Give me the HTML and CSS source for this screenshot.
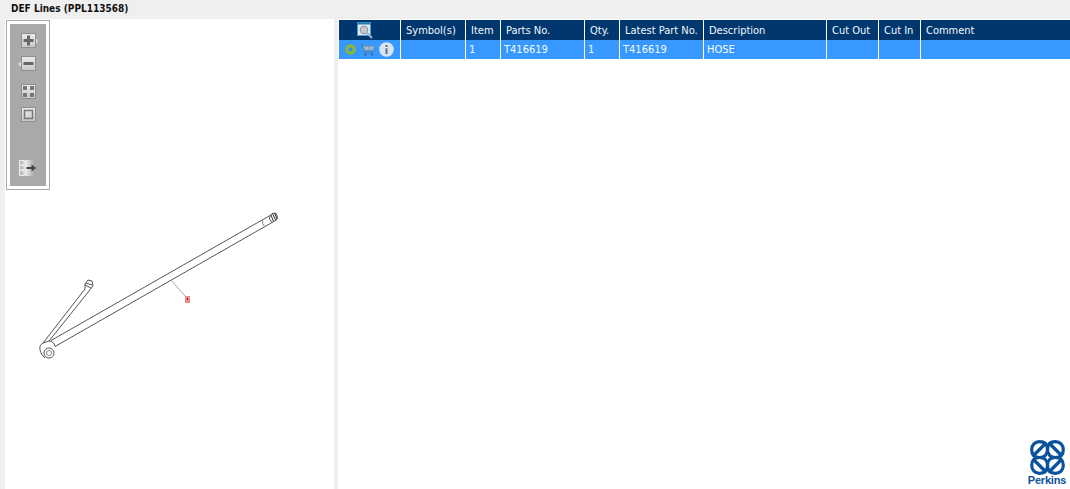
FILE: index.html
```html
<!DOCTYPE html>
<html lang="en">
<head>
<meta charset="utf-8">
<title>DEF Lines</title>
<link rel="stylesheet" href="styles.css">
</head>
<body>
<div class="app">
  <header class="title">DEF Lines (PPL113568)</header>
  <main class="main">
    <section class="viewer">
      <svg class="drawing" width="329" height="470" viewBox="5 19 329 470" fill="none">
        <g stroke="#555" stroke-width="1">
          <path d="M270 215.500L51 340.500M272 222.500L55 346.500"/>
          <path d="M43 343L85 289M49 341L89 291"/>
          <path d="M85 289L85 284L88 280L92 281L93 286L89 291M85 285L91 288M86 283L92 285"/>
          <path d="M262.500 220Q262 224 264.500 226.500" stroke="#888"/>
          <path d="M270 215.500L273 213L276 213.500L277.500 217L276.500 220L272 222.500Q268 219 270 215.500Z" fill="#fff"/>
          <path d="M272.500 213.500L275.500 220M274.500 213L277 219M271 215L273.500 221.500" stroke="#333"/>
          <path d="M40 350Q39 345 43 343L49 341Q54 341 55 346.500M40 350Q41 355 45 358"/>
          <circle cx="49" cy="353" r="5" fill="#fff"/>
          <circle cx="49" cy="353" r="2.500" stroke="#888"/>
        </g>
        <path d="M171 280L185 296" stroke="#aaa" stroke-width="1"/>
        <rect x="185" y="296" width="5" height="7" fill="#f08a8a"/>
        <rect x="187" y="298" width="1" height="2" fill="#733"/>
      </svg>
      <nav class="toolbar-frame">
        <div class="toolbar">
          <button class="tool tool-zoom-in" type="button" aria-label="Zoom in">
            <svg width="15" height="15" viewBox="0 0 15 15"><path d="M6 2.500h3V6h3.500v3H9v3.500H6V9H2.500V6H6z" fill="#666"/></svg>
          </button>
          <button class="tool tool-zoom-out" type="button" aria-label="Zoom out">
            <svg width="15" height="15" viewBox="0 0 15 15"><path d="M2.500 6h10v3h-10z" fill="#666"/></svg>
          </button>
          <button class="tool tool-grid" type="button" aria-label="Fit all">
            <svg width="15" height="15" viewBox="0 0 15 15"><path d="M2 2h4v4H2zM9 2h4v4H9zM2 9h4v4H2zM9 9h4v4H9z" fill="#777"/></svg>
          </button>
          <button class="tool tool-single" type="button" aria-label="Fit one">
            <svg width="15" height="15" viewBox="0 0 15 15"><rect x="3.500" y="3.500" width="8" height="8" fill="none" stroke="#777" stroke-width="1.500"/></svg>
          </button>
          <button class="tool-panel" type="button" aria-label="Show list">
            <svg width="18" height="16" viewBox="0 0 18 16">
              <defs><linearGradient id="fade"><stop offset="0" stop-color="#f4f4f4"/><stop offset="1" stop-color="#f4f4f4" stop-opacity="0"/></linearGradient></defs>
              <path d="M.500.500h4.500v4.500H.500zM.500 5.500h4.500v4.500H.500zM.500 10.500h4.500v5H.500z" fill="#bdbdbd" stroke="#eee"/>
              <path d="M5.500 0H15v16H5.500z" fill="url(#fade)"/>
              <path d="M7.500 7h5V4.500L17 8l-4.500 3.500V9h-5z" fill="#444"/>
            </svg>
          </button>
        </div>
      </nav>
    </section>
    <section class="parts">
      <table class="grid">
        <colgroup>
          <col class="c-icons"><col class="c-symbol"><col class="c-item"><col class="c-partno"><col class="c-qty"><col class="c-latest"><col class="c-desc"><col class="c-cutout"><col class="c-cutin"><col>
        </colgroup>
        <thead>
          <tr>
            <th class="head-icon">
              <svg width="17" height="17" viewBox="0 0 17 17" fill="none">
                <rect x=".500" y=".500" width="13" height="13" fill="#dfe9f2" stroke="#4f9bd0"/>
                <path d="M1 1.500h12" stroke="#1f78b8" stroke-width="2"/>
                <circle cx="7" cy="8" r="3.800" fill="#c9c9c9" stroke="#8a94a0"/>
                <path d="M10 11l5 5" stroke="#8fb4d4" stroke-width="2"/>
              </svg>
            </th>
            <th>Symbol(s)</th>
            <th>Item</th>
            <th>Parts No.</th>
            <th>Qty.</th>
            <th>Latest Part No.</th>
            <th>Description</th>
            <th>Cut Out</th>
            <th>Cut In</th>
            <th>Comment</th>
          </tr>
        </thead>
        <tbody>
          <tr>
            <td class="row-icons">
              <span class="icon-set">
                <svg width="11" height="11" viewBox="0 0 12 12"><circle cx="6" cy="6" r="4" fill="none" stroke="#8dbb2e" stroke-width="3"/><circle cx="6" cy="6" r="5.200" fill="none" stroke="#8dbb2e" stroke-width="1.400" stroke-dasharray="2 2"/><circle cx="6" cy="6" r="1.700" fill="#3a8fd8"/></svg>
                <svg width="15" height="12" viewBox="0 0 15 12" fill="none"><path d="M0 .800h2.500l2 7.500h9" stroke="#4f7ea8"/><path d="M3 2h11.500l-1.500 4.500H4.500z" fill="#a9bfd2" stroke="#5c87ac" stroke-width=".7"/><path d="M6 2v4.500M8.500 2v4.500M11 2v4.500" stroke="#6d93b4" stroke-width=".7"/><circle cx="5.500" cy="10.500" r="1.200" fill="#3f6f9c"/><circle cx="12" cy="10.500" r="1.200" fill="#3f6f9c"/></svg>
                <svg width="15" height="15" viewBox="0 0 15 15"><circle cx="7.500" cy="7.500" r="7.300" fill="#d9e4ee"/><path d="M6.500 3h2v2h-2zM6.500 6.300h2V12h-2z" fill="#4d6f93"/></svg>
              </span>
            </td>
            <td></td>
            <td>1</td>
            <td>T416619</td>
            <td>1</td>
            <td>T416619</td>
            <td>HOSE</td>
            <td></td>
            <td></td>
            <td></td>
          </tr>
        </tbody>
      </table>
      <div class="brand">
        <svg width="35" height="35" viewBox="0 0 35 35" fill="none" stroke="#0a539c" stroke-width="3.200">
          <path d="M17.500 9.500C17.500 4 14 1.700 9.500 1.700S1.700 5 1.700 9.500 4 17.500 9.500 17.500 17.500 14 17.500 9.500Z"/>
          <path d="M17.500 9.500C17.500 4 21 1.700 25.500 1.700s7.800 3.300 7.800 7.800-2.300 8-7.800 8-8-3.500-8-8Z"/>
          <path d="M17.500 25.500C17.500 31 14 33.300 9.500 33.300s-7.800-3.300-7.800-7.800 2.300-8 7.800-8 8 3.500 8 8Z"/>
          <path d="M17.500 25.500C17.500 31 21 33.300 25.500 33.300s7.800-3.300 7.800-7.800-2.300-8-7.800-8-8 3.500-8 8Z"/>
          <path d="M4 15L15 4M20 4l11 11M4 20l11 11M31 20L20 31"/>
        </svg>
        <span class="brand-name">Perkins</span>
      </div>
    </section>
  </main>
</div>
</body>
</html>
```
FILE: styles.css
```css
* { box-sizing: border-box; }
html, body { margin: 0; height: 100%; overflow: hidden; }
body { font-family: "DejaVu Sans Condensed", "DejaVu Sans", sans-serif; font-stretch: condensed; background: #efefef; color: #000; }

.app { display: flex; flex-direction: column; height: 489px; width: 1070px; }
.title {
  height: 19px;
  padding: 1px 0 0 11px;
  font-size: 10px;
  line-height: 15px;
  font-weight: 700;
  color: #111;
  background: #efefef;
}
.main { flex: 1; display: flex; padding-left: 5px; gap: 4px; min-height: 0; }

.viewer { position: relative; width: 329px; background: #fff; }
.drawing { display: block; }
.toolbar-frame {
  position: absolute;
  left: 1px;
  top: 1px;
  width: 44px;
  height: 170px;
  padding: 3px;
  background: #fff;
  border: 1px solid #a9a9a9;
}
.toolbar {
  height: 100%;
  background: #a9a9a9;
  display: flex;
  flex-direction: column;
  align-items: center;
  padding-top: 9px;
}
.tool, .tool-panel { position: relative; display: block; padding: 0; border: 0; background: none; line-height: 0; }
.tool {
  width: 15px;
  height: 15px;
  background: linear-gradient(#ededed, #c6c6c6);
  box-shadow: 0 0 0 1px #8e8e8e inset, 1px 1px 0 #d0d0d0 inset;
}
.tool-zoom-in::after, .tool-zoom-out::after {
  content: "";
  position: absolute;
  top: 5px;
  border: 3px solid transparent;
}
.tool-zoom-in::after { left: 15px; border-left: 2px solid #dcdcdc; border-right: 0; }
.tool-zoom-out::after { right: 15px; border-right: 3px solid #dcdcdc; border-left: 0; }
.tool-zoom-out { margin-top: 8px; }
.tool-grid { margin-top: 13px; }
.tool-single { margin-top: 8px; }
.tool-panel { margin-top: 38px; margin-left: -1px; }

.parts { position: relative; flex: 1; background: #fff; padding-top: 1px; }
.grid { width: 732px; table-layout: fixed; border-collapse: separate; border-spacing: 0; font-size: 11px; }
.c-icons { width: 62px; }
.c-symbol { width: 65px; }
.c-item { width: 35px; }
.c-partno { width: 84px; }
.c-qty { width: 35px; }
.c-latest { width: 84px; }
.c-desc { width: 123px; }
.c-cutout { width: 52px; }
.c-cutin { width: 42px; }
.grid th {
  height: 20px;
  padding: 0 0 0 5px;
  background: #00376f;
  color: #f4f8fc;
  font-weight: 400;
  text-align: left;
  border-left: 1px solid #fff;
  white-space: nowrap;
  overflow: hidden;
}
.grid td {
  height: 19px;
  padding: 0 0 0 3px;
  background: #3799ff;
  color: #f4f9ff;
  border-left: 1px solid #fff;
  white-space: nowrap;
}
.grid .head-icon { padding: 0 0 0 18px; line-height: 0; }
.grid .row-icons { padding: 0 0 0 6px; }
.icon-set { display: flex; align-items: center; gap: 6px; }
.icon-set svg:nth-child(2) { margin-left: -2px; }
.icon-set svg:nth-child(3) { margin-left: -2px; }

.brand {
  position: absolute;
  right: 3px;
  bottom: 3px;
  display: flex;
  flex-direction: column;
  align-items: center;
  width: 40px;
}
.brand-name {
  font-family: "Liberation Sans", sans-serif;
  font-size: 11px;
  font-stretch: normal;
  line-height: 11px;
  font-weight: 700;
  color: #0a539c;
  letter-spacing: -.2px;
}
```
